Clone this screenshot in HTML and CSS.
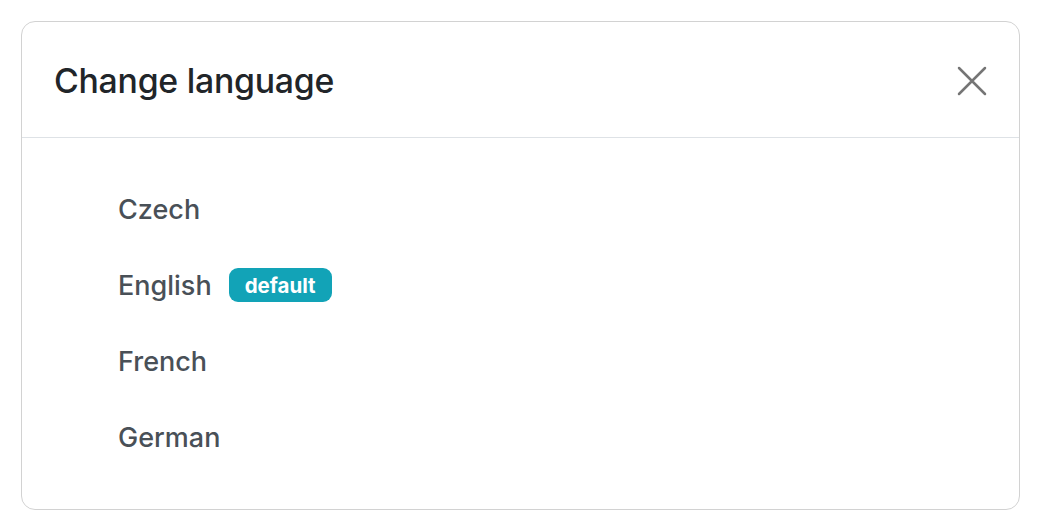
FILE: index.html
```html
<!DOCTYPE html>
<html lang="en">
<head>
<meta charset="utf-8">
<title>Change language</title>
<link rel="stylesheet" href="styles.css">
</head>
<body>
<div class="modal">
  <div class="modal-header">
    <h2 class="modal-title">Change language</h2>
    <button class="close" aria-label="Close">
      <svg width="30" height="30" viewBox="0 0 30 30"><path d="M2 2 L28 28 M28 2 L2 28" stroke="#757575" stroke-width="2.5" stroke-linecap="round" fill="none"/></svg>
    </button>
  </div>
  <div class="modal-body">
    <ul class="lang-list">
      <li class="lang">Czech</li>
      <li class="lang">English <span class="badge">default</span></li>
      <li class="lang">French</li>
      <li class="lang">German</li>
    </ul>
  </div>
</div>
</body>
</html>
```

FILE: styles.css
```css
html, body {
  margin: 0;
  padding: 0;
  background: #ffffff;
}
body {
  padding: 21px 0 0 21px;
  font-family: Inter, "Liberation Sans", sans-serif;
}
.modal {
  width: 999px;
  height: 489px;
  border: 1.5px solid #d2d2d2;
  border-radius: 14px;
  box-sizing: border-box;
  background: #fff;
  display: flex;
  flex-direction: column;
}
.modal-header {
  height: 116px;
  box-sizing: border-box;
  border-bottom: 1.5px solid #dee2e6;
  display: flex;
  align-items: center;
  justify-content: space-between;
  padding: 2px 32px 0 32px;
}
.modal-title {
  margin: 0;
  font-size: 33.8px;
  font-weight: 500;
  color: #212529;
  letter-spacing: -0.25px;
}
.close {
  background: none;
  border: 0;
  padding: 0;
  width: 30px;
  height: 30px;
  display: flex;
  cursor: pointer;
}
.modal-body {
  padding: 33px 0 0 96px;
}
.lang-list {
  list-style: none;
  margin: 0;
  padding: 0;
}
.lang {
  height: 76px;
  display: flex;
  align-items: center;
  font-size: 27px;
  font-weight: 500;
  color: #495057;
}
.badge {
  margin-left: 17px;
  background: #12a3b7;
  color: #fff;
  font-size: 20.5px;
  font-weight: 700;
  border-radius: 9px;
  height: 34px;
  padding: 0 16px;
  display: inline-flex;
  align-items: center;
  box-sizing: border-box;
}
```
